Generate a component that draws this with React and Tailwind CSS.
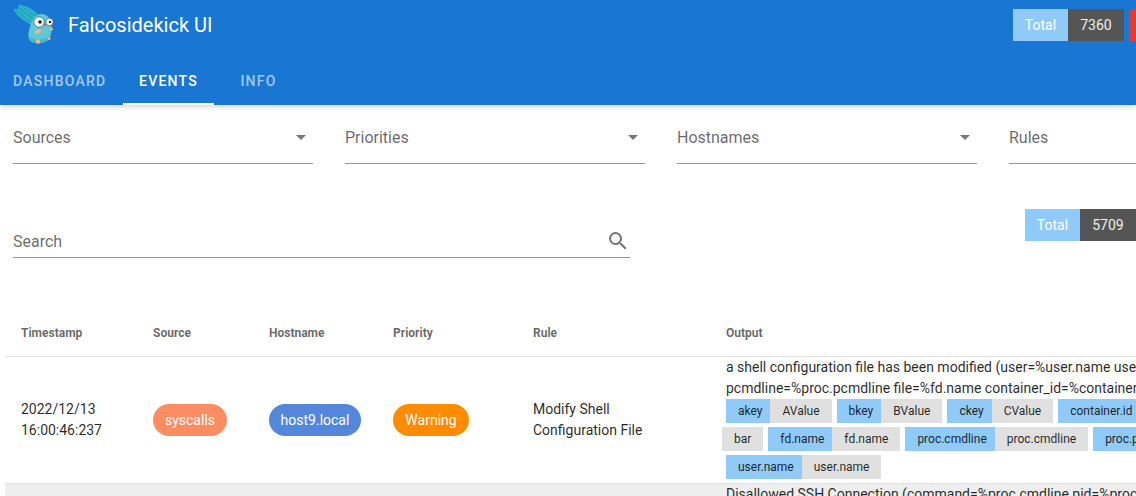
import React from "react";

const filters = ["Sources", "Priorities", "Hostnames", "Rules"];

const firstRow = [
  { key: "akey", value: "AValue" },
  { key: "bkey", value: "BValue" },
  { key: "ckey", value: "CValue" },
  { key: "container.id", value: "container.id" },
];

const secondRow = [
  { value: "bar" },
  { key: "fd.name", value: "fd.name" },
  { key: "proc.cmdline", value: "proc.cmdline" },
  { key: "proc.pcmdline", value: "proc.pcmdline" },
];

const Logo = () => (
  <svg className="w-11 h-11 shrink-0" viewBox="12 3 44 44">
    {/* wing */}
    <path d="M19 4.500 L28 7 L37 13 L35 25 L30 24 L23 20 L17 15 L13.500 9 L18 9 Z" fill="#27b3c8" />
    <path d="M16 10.500 L32 23 M19.500 8 L34 20 M24 8 L35.500 16.500" stroke="#2390b8" strokeWidth="0.8" fill="none" />
    {/* body */}
    <path d="M41 14 C47 14 51.500 18 51.500 25 C51.500 31 51.500 37 48 40 C44 44 34 44 30.500 41 C27 38 28.500 31 30.500 25 C32.500 18 36 14 41 14 Z" fill="#5fc8d4" />
    <path d="M30.500 41 C34 44 44 44 48 40 C49 39 50 37 50.500 35 C45 40 36 41 29 37 C29 39 29.500 40 30.500 41 Z" fill="#4ab5c3" />
    {/* hands and feet */}
    <path d="M35 31 C37 29 41 29 41 31 C41 33 38 34 36 34 C35 34 34.500 32 35 31 Z" fill="#f3b48a" />
    <circle cx="51.500" cy="29" r="1.500" fill="#f3b48a" />
    <circle cx="38" cy="41.500" r="2.200" fill="#f3b48a" />
    <circle cx="49" cy="38.500" r="1.500" fill="#f3b48a" />
    {/* eyes */}
    <circle cx="39" cy="22" r="5.200" fill="#fff" stroke="#2a5560" strokeWidth="0.7" />
    <circle cx="49.500" cy="22" r="3.700" fill="#fff" stroke="#2a5560" strokeWidth="0.7" />
    <circle cx="40" cy="22" r="1.800" fill="#222" />
    <circle cx="50" cy="22" r="1.300" fill="#222" />
    <path d="M43.500 24 L46 24 L45 26.500 Z" fill="#9a6a50" />
  </svg>
);

const TotalChip = ({ count }) => (
  <div className="flex h-8 text-sm leading-8 shrink-0">
    <span className="w-[55px] text-center bg-[#90caf9] text-white">Total</span>
    <span className="w-[56px] text-center bg-[#555555] text-white/90">{count}</span>
  </div>
);

const Pill = ({ className, children }) => (
  <span className={`inline-block h-8 leading-8 text-center rounded-2xl text-sm text-white ${className}`}>
    {children}
  </span>
);

const Tag = ({ tag }) => (
  <span className="flex h-6 leading-6 text-xs text-black/85 shrink-0">
    {tag.key && <span className="pl-3 pr-2 bg-[#90caf9]">{tag.key}</span>}
    <span className="px-3 bg-[#e0e0e0]">{tag.value}</span>
  </span>
);

const App = () => {
  return (
    <div className="w-[1136px] h-[496px] overflow-hidden bg-white font-['Roboto',sans-serif] text-black/85">
      <header className="relative z-10 h-[105px] bg-[#1976d2] shadow-md">
        <div className="flex items-center h-[57px] pb-[7px] pl-3">
          <Logo />
          <h1 className="ml-3 text-xl text-white whitespace-nowrap">Falcosidekick UI</h1>
          <div className="flex items-center ml-auto shrink-0 gap-[5px]">
            <TotalChip count="7360" />
            <span className="w-[7px] h-8 bg-[#e53935]" />
          </div>
        </div>
        <nav className="flex h-12 text-sm font-medium uppercase tracking-[0.089em]">
          <span className="flex items-center w-[123px] pl-[13px] text-white/60">Dashboard</span>
          <span className="flex items-center justify-center w-[91px] pt-0.5 text-white border-b-2 border-white">Events</span>
          <span className="flex items-center justify-center w-[89px] text-white/60">Info</span>
        </nav>
      </header>

      <div className="flex gap-8 pl-[13px] pt-5">
        {filters.map((name) => (
          <div
            key={name}
            className="flex items-center justify-between shrink-0 w-[300px] h-[39px] pb-[13px] border-b border-[#949494] text-base text-black/60"
          >
            <span>{name}</span>
            <span className="mr-[7px] w-0 h-0 border-x-[5px] border-x-transparent border-t-[5px] border-t-[#757575]" />
          </div>
        ))}
      </div>

      <div className="flex justify-between items-start pl-[13px] mt-[45px]">
        <div className="flex items-center justify-between w-[617px] mt-5 pb-1 border-b border-[#949494] text-base text-black/60">
          <span className="h-6 pt-px">Search</span>
          <svg className="w-6 h-6" viewBox="0 0 24 24" fill="#757575">
            <path d="M9.5,3A6.5,6.5 0 0,1 16,9.5C16,11.11 15.41,12.59 14.44,13.73L14.71,14H15.5L20.5,19L19,20.5L14,15.5V14.71L13.73,14.44C12.59,15.41 11.11,16 9.5,16A6.5,6.5 0 0,1 3,9.5A6.5,6.5 0 0,1 9.5,3M9.5,5C7,5 5,7 5,9.5C5,12 7,14 9.5,14C12,14 14,12 14,9.5C14,7 12,5 9.5,5Z" />
          </svg>
        </div>
        <TotalChip count="5709" />
      </div>

      <table className="table-fixed w-[1500px] ml-[5px] mt-[51px] border-collapse text-sm">
        <thead>
          <tr className="h-[47px] border-b border-[#e0e0e0] text-xs font-bold text-black/60 text-left">
            <th className="w-[132px] px-4 pt-0.5 font-bold">Timestamp</th>
            <th className="w-[116px] px-4 pt-0.5 font-bold">Source</th>
            <th className="w-[124px] px-4 pt-0.5 font-bold">Hostname</th>
            <th className="w-[140px] px-4 pt-0.5 font-bold">Priority</th>
            <th className="w-[193px] px-4 pt-0.5 font-bold">Rule</th>
            <th className="px-4 pt-0.5 font-bold">Output</th>
          </tr>
        </thead>
        <tbody>
          <tr className="border-b border-[#e0e0e0]">
            <td className="px-4 leading-[21px]">2022/12/13<br />16:00:46:237</td>
            <td className="px-4"><Pill className="w-[74px] bg-[#fc8d62]">syscalls</Pill></td>
            <td className="px-4"><Pill className="w-[92px] bg-[#5487d9]">host9.local</Pill></td>
            <td className="px-4"><Pill className="w-[76px] bg-[#ff8c00]">Warning</Pill></td>
            <td className="px-4 leading-[21px]">Modify Shell Configuration File</td>
            <td className="px-4 pb-1 align-top leading-[21px]">
              <div className="whitespace-nowrap">
                a shell configuration file has been modified (user=%user.name user_loginuid=%user.loginuid command=%proc.cmdline
                <br />
                pcmdline=%proc.pcmdline file=%fd.name container_id=%container.id image=%container.image.repository)
              </div>
              <div className="flex flex-col gap-1">
                <div className="flex gap-[5px]">
                  {firstRow.map((tag) => <Tag key={tag.key} tag={tag} />)}
                </div>
                <div className="flex gap-[5px] -ml-1">
                  {secondRow.map((tag) => <Tag key={tag.value} tag={tag} />)}
                </div>
                <div className="flex gap-[5px]">
                  <Tag tag={{ key: "user.name", value: "user.name" }} />
                </div>
              </div>
            </td>
          </tr>
          <tr className="bg-[#eeeeee]">
            <td colSpan={5} />
            <td className="px-4 align-top leading-[21px] whitespace-nowrap">
              Disallowed SSH Connection (command=%proc.cmdline pid=%proc.pid connection=%fd.name user=%user.name)
            </td>
          </tr>
        </tbody>
      </table>
    </div>
  );
};

export default App;
